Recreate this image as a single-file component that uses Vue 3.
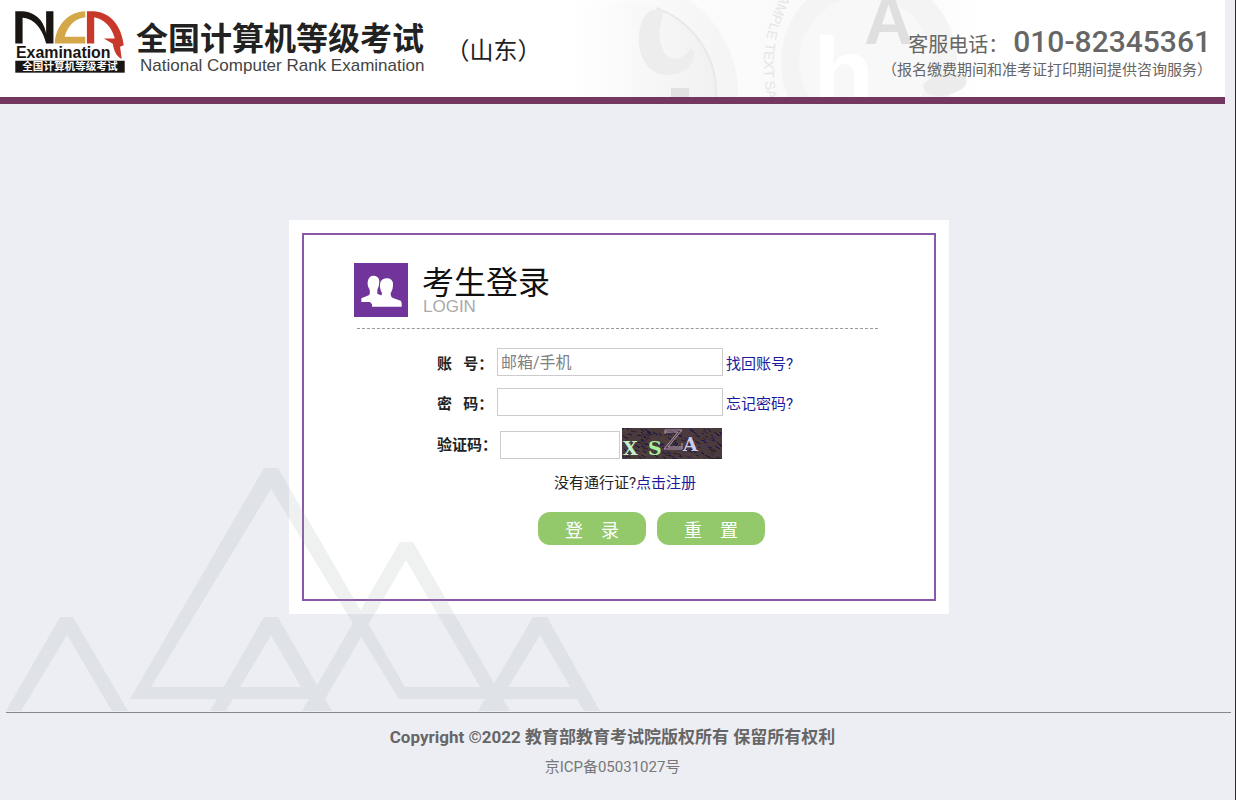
<script setup>
import { reactive } from 'vue'

const form = reactive({ account: '', password: '', captcha: '' })

function reset() {
  form.account = ''
  form.password = ''
  form.captcha = ''
}

// Short strokes scattered over the captcha picture.
const inks = ['#1c1450', '#27204f', '#5a4838', '#2a2028', '#4a3a5c', '#171238']
const strokes = Array.from({ length: 220 }, (_, i) => {
  const x = (i * 37 + ((i * i) % 23)) % 100
  const y = (i * 13 + ((i * i) % 17)) % 32
  return { d: `M${x} ${y}l${2 + (i % 4)} ${(i % 3) + 1}`, color: inks[(i * 7) % 6] }
})
</script>

<template>
  <div class="page">
    <header class="header">
      <svg class="header-art" viewBox="0 0 420 97" aria-hidden="true">
        <defs>
          <linearGradient id="fade" x1="0" x2="1">
            <stop offset="0" stop-color="#fff" />
            <stop offset=".5" stop-color="#fafafa" />
            <stop offset=".85" stop-color="#fafafa" />
            <stop offset="1" stop-color="#fff" />
          </linearGradient>
          <linearGradient id="disc" gradientUnits="userSpaceOnUse" x1="10" x2="165" y1="0" y2="0">
            <stop offset="0" stop-color="#fff" />
            <stop offset="1" stop-color="#f0f0f0" />
          </linearGradient>
          <linearGradient id="rim" gradientUnits="userSpaceOnUse" x1="10" x2="180" y1="0" y2="0">
            <stop offset="0" stop-color="#fff" />
            <stop offset="1" stop-color="#f4f4f4" />
          </linearGradient>
          <path id="ring" d="M228 -14Q194 42 210 104" />
        </defs>
        <rect width="420" height="97" fill="url(#fade)" />
        <circle cx="67" cy="93" r="112" fill="url(#rim)" />
        <circle cx="67" cy="93" r="90" fill="url(#disc)" />
        <path d="M97 8A90 90 0 0 1 157 97" fill="none" stroke="#e9e9e9" stroke-width="2" />
        <path d="M92 10C72 24 76 74 108 75C134 75 140 54 132 48C122 64 106 62 102 44C97 28 106 16 104 10Z" fill="#ededed" />
        <rect x="112" y="88" width="18" height="9" fill="#e2e2e2" />
        <circle cx="310" cy="62" r="88" fill="#f4f4f4" />
        <circle cx="306" cy="62" r="66" fill="#f8f8f8" />
        <text class="ring-text" fill="#e6e6e6"><textPath href="#ring">SAMPLE TEXT SAMPLE</textPath></text>
        <text class="ball-small" x="254" y="108" fill="#fff">h</text>
        <text class="ball-letter" x="305" y="44" fill="#dfdfdf">A</text>
        <path d="M364 84Q382 68 406 76Q414 90 382 96Q364 96 364 84Z" fill="#ececec" />
      </svg>

      <div class="brand">
        <svg class="logo" viewBox="0 0 330 187" role="img" aria-label="NCR Examination">
          <path d="M0 1H22C66 4 88 36 93 68V1H115V98H93C83 56 58 22 22 20V98H0Z" fill="#191512" />
          <path d="M211 1V19C180 22 157 46 149 78H211V98H119C122 45 158 3 211 1Z" fill="#d4a849" />
          <path d="M216 1H238C288 5 320 45 327 103L316 108L321 145C303 137 297 116 294 99L267 83H300C291 48 268 24 238 19V98H216Z" fill="#c8392b" />
          <text x="2" y="141" class="logo-word" fill="#191512">Examination</text>
          <rect y="150" width="330" height="36" fill="#191512" />
          <text x="21" y="179" class="logo-cn" fill="#fff">全国计算机等级考试</text>
        </svg>
        <div class="brand-name">
          <h1>全国计算机等级考试</h1>
          <p>National Computer Rank Examination</p>
        </div>
        <span class="region">（山东）</span>
      </div>

      <div class="hotline">
        <div class="phone">客服电话： <strong>010-82345361</strong></div>
        <div class="note">（报名缴费期间和准考证打印期间提供咨询服务）</div>
      </div>
    </header>

    <main class="main">
      <section class="card">
        <div class="frame">
          <div class="title">
            <svg class="title-icon" viewBox="0 0 162 162" aria-hidden="true">
              <rect width="162" height="162" fill="#71349b" />
              <path d="M22 117V106L44 97Q49 94 47 80Q38 68 42 52Q46 37 60 38Q74 39 76 53Q76 70 70 80V92L84 98V117Z" fill="#fff" />
              <path d="M54 131V124L48 117L76 104Q85 98 84 90Q75 76 79 58Q84 46 99 46Q114 46 117 60Q118 78 110 90Q109 100 115 104L140 113Q144 117 143 131Z" fill="#fff" />
            </svg>
            <div>
              <h2>考生登录</h2>
              <p>LOGIN</p>
            </div>
          </div>

          <form class="form" @submit.prevent @reset.prevent="reset">
            <div class="row">
              <label for="account">账&nbsp;&nbsp; 号：</label>
              <input id="account" v-model="form.account" class="wide" type="text" placeholder="邮箱/手机" />
              <a href="#">找回账号?</a>
            </div>
            <div class="row">
              <label for="password">密&nbsp;&nbsp; 码：</label>
              <input id="password" v-model="form.password" class="wide" type="password" />
              <a href="#">忘记密码?</a>
            </div>
            <div class="row code-row">
              <label for="captcha">验证码：</label>
              <input id="captcha" v-model="form.captcha" class="code" type="text" />
              <svg class="captcha" viewBox="0 0 100 31" role="img" aria-label="X S Z A">
                <rect width="100" height="31" fill="#4a3a3c" />
                <path v-for="(s, i) in strokes" :key="i" :d="s.d" :stroke="s.color" />
                <text x="1" y="27" fill="#c3f0cf">X</text>
                <text x="26" y="27" fill="#a5f39a">S</text>
                <path d="M43 6V2H60L46 19H60V15M43 4H56L42 21H60V19" fill="none" stroke="#b39ab3" />
                <text x="61" y="23" fill="#c9cdf2">A</text>
              </svg>
            </div>
            <p class="signup">没有通行证?<a href="#">点击注册</a></p>
            <div class="actions">
              <button type="submit">登　录</button>
              <button type="reset">重　置</button>
            </div>
          </form>
        </div>
      </section>

      <svg class="mountains" viewBox="0 0 600 244" aria-hidden="true">
        <g fill="#96a5a5" opacity=".15">
          <path d="M6 244L60 150H73L128 244H112L67 168L21 244Z" />
          <path d="M130 232L264 1H278L405 220H585V232H399L271 22L151 220H325V232Z" />
          <path d="M210 244L264 150H278L332 244H315L271 168L226 244Z" />
          <path d="M302 244L400 75H413L510 244H494L406 93L318 244Z" />
          <path d="M478 244L533 150H547L600 244H584L540 168L494 244Z" />
        </g>
      </svg>
    </main>

    <footer class="footer">
      <p class="copyright">Copyright ©2022 教育部教育考试院版权所有 保留所有权利</p>
      <p class="icp">京ICP备05031027号</p>
    </footer>
  </div>
</template>

<style>
body {
  margin: 0;
  background: #edeef3;
}
</style>

<style scoped>
.page {
  box-sizing: border-box;
  display: flex;
  flex-direction: column;
  min-height: 100vh;
  border-right: 1px solid #2c2c30;
  background: #edeef3;
  color: #222;
  font-family: Roboto, "Noto Sans CJK SC", sans-serif;
  font-size: 15px;
}
h1, h2, p {
  margin: 0;
}
a {
  color: #1a1a9c;
  text-decoration: none;
}

.header {
  position: relative;
  display: flex;
  justify-content: space-between;
  box-sizing: border-box;
  height: 104px;
  margin-right: 10px;
  border-bottom: 7px solid #74375f;
  background: #fff;
}
.header-art {
  position: absolute;
  top: 0;
  right: 246px;
  width: 420px;
  height: 97px;
}
.ring-text {
  font: 14px "Liberation Sans", sans-serif;
}
.ball-small {
  font: bold 100px "Liberation Sans", sans-serif;
}
.ball-letter {
  font: bold 68px "Liberation Sans", sans-serif;
}
.brand {
  position: relative;
  display: flex;
  align-items: flex-start;
  padding: 11px 0 0 15px;
}
.logo {
  width: 110px;
  height: 62px;
}
.logo-word {
  font: bold 48px "Liberation Sans", sans-serif;
}
.logo-cn {
  font: bold 32px "Noto Sans CJK SC", sans-serif;
}
.brand-name {
  margin-left: 11px;
}
.brand-name h1 {
  padding-top: 10px;
  font-size: 32px;
  line-height: 37px;
  font-weight: 700;
}
.brand-name p {
  padding-left: 4px;
  font-family: "Liberation Sans", sans-serif;
  font-size: 17px;
  line-height: 16px;
  color: #444;
}
.region {
  margin: 23px 0 0 21px;
  font-size: 24px;
  line-height: 34px;
}
.hotline {
  position: relative;
  padding: 24px 13px 0 0;
  text-align: right;
  color: #666;
}
.phone {
  padding-right: 1px;
  font-size: 20px;
  line-height: 36px;
}
.phone strong {
  font-size: 30px;
  font-weight: 500;
}
.note {
  line-height: 14px;
}

.main {
  position: relative;
  flex: 1;
  padding: 116px 0 98px 3px;
}
.card {
  box-sizing: border-box;
  width: 660px;
  max-width: 100%;
  margin: 0 auto;
  padding: 13px;
  background: #fff;
}
.frame {
  border: 2px solid #8a58a8;
  padding: 28px 56px 54px 50px;
}
.title {
  display: flex;
  gap: 14px;
}
.title::after {
  content: none;
}
.title-icon {
  flex: none;
  width: 54px;
  height: 54px;
}
.title h2 {
  padding-top: 2px;
  font-size: 32px;
  line-height: 36px;
  font-weight: 400;
  color: #111;
}
.title p {
  padding-left: 1px;
  font-family: "Liberation Sans", sans-serif;
  font-size: 17px;
  line-height: 11px;
  color: #aaa;
}
.form {
  margin: 11px 0 0 3px;
  padding: 19px 0 0 80px;
  border-top: 1px dashed #999;
}
.row {
  display: flex;
  align-items: center;
  margin-bottom: 12px;
}
.row label {
  min-width: 60px;
  font-weight: 700;
}
.row input {
  box-sizing: border-box;
  height: 28px;
  padding: 0 3px;
  border: 1px solid #ccc;
  background: #fff;
  font: 16px Roboto, "Noto Sans CJK SC", sans-serif;
}
.row input::placeholder {
  color: #808080;
}
.row .wide {
  width: 226px;
  margin-right: 3px;
}
.code-row {
  margin-bottom: 13px;
}
.row .code {
  width: 120px;
  margin: 2px 2px 0 3px;
}
.captcha {
  width: 100px;
  height: 31px;
}
.captcha text {
  font: bold 19px "DejaVu Serif", serif;
}
.signup {
  padding-left: 117px;
  line-height: 22px;
}
.actions {
  display: flex;
  gap: 11px;
  padding: 18px 0 0 101px;
}
.actions button {
  width: 108px;
  height: 33px;
  padding: 0;
  border: 0;
  border-radius: 12px;
  background: #93c96b;
  color: #fff;
  font: 18px Roboto, "Noto Sans CJK SC", sans-serif;
}
.mountains {
  position: absolute;
  left: 0;
  bottom: 1px;
  width: 600px;
  height: 244px;
  pointer-events: none;
}

.footer {
  margin: 0 4px 0 6px;
  padding: 12px 12px 21px 0;
  border-top: 1px solid #88888c;
  box-shadow: 0 1px #c4c4c8;
  text-align: center;
  color: #666;
}
.copyright {
  font-size: 17px;
  line-height: 24px;
  font-weight: 700;
}
.icp {
  padding-top: 6px;
  line-height: 24px;
  color: #777;
}
</style>
